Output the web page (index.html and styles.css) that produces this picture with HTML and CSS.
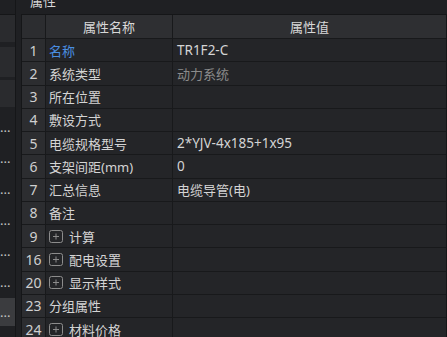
FILE: index.html
```html
<!DOCTYPE html>
<html lang="zh">
<head>
  <meta charset="UTF-8">
  <title>属性</title>
  <link rel="stylesheet" href="styles.css">
</head>
<body>
  <div class="side">
    <div class="side-top"></div>
    <div class="side-band"></div>
    <div class="side-band tall"></div>
    <div class="side-band"></div>
    <div class="side-item">...</div>
    <div class="side-item">...</div>
    <div class="side-item">...</div>
    <div class="side-item">...</div>
    <div class="side-item">...</div>
    <div class="side-item">...</div>
    <div class="side-item active">...</div>
  </div>

  <div class="main">
    <div class="title"><span>属性</span></div>

    <div class="grid">
      <div class="row head">
        <div class="idx"></div>
        <div class="name">属性名称</div>
        <div class="val">属性值</div>
      </div>
      <div class="row">
        <div class="idx">1</div>
        <div class="name link">名称</div>
        <div class="val num">TR1F2-C</div>
      </div>
      <div class="row">
        <div class="idx">2</div>
        <div class="name">系统类型</div>
        <div class="val muted">动力系统</div>
      </div>
      <div class="row">
        <div class="idx">3</div>
        <div class="name">所在位置</div>
        <div class="val"></div>
      </div>
      <div class="row">
        <div class="idx">4</div>
        <div class="name">敷设方式</div>
        <div class="val"></div>
      </div>
      <div class="row">
        <div class="idx">5</div>
        <div class="name">电缆规格型号</div>
        <div class="val num">2*YJV-4x185+1x95</div>
      </div>
      <div class="row">
        <div class="idx">6</div>
        <div class="name">支架间距(mm)</div>
        <div class="val num">0</div>
      </div>
      <div class="row">
        <div class="idx">7</div>
        <div class="name">汇总信息</div>
        <div class="val">电缆导管(电)</div>
      </div>
      <div class="row">
        <div class="idx">8</div>
        <div class="name">备注</div>
        <div class="val"></div>
      </div>
      <div class="row">
        <div class="idx">9</div>
        <div class="name group"><svg class="plus" viewBox="0 0 14 13"><rect x="0.5" y="0.5" width="13" height="12" rx="2"/><path d="M7 3.5v6M4 6.5h6"/></svg>计算</div>
        <div class="val"></div>
      </div>
      <div class="row">
        <div class="idx">16</div>
        <div class="name group"><svg class="plus" viewBox="0 0 14 13"><rect x="0.5" y="0.5" width="13" height="12" rx="2"/><path d="M7 3.5v6M4 6.5h6"/></svg>配电设置</div>
        <div class="val"></div>
      </div>
      <div class="row">
        <div class="idx">20</div>
        <div class="name group"><svg class="plus" viewBox="0 0 14 13"><rect x="0.5" y="0.5" width="13" height="12" rx="2"/><path d="M7 3.5v6M4 6.5h6"/></svg>显示样式</div>
        <div class="val"></div>
      </div>
      <div class="row">
        <div class="idx">23</div>
        <div class="name">分组属性</div>
        <div class="val"></div>
      </div>
      <div class="row">
        <div class="idx">24</div>
        <div class="name group"><svg class="plus" viewBox="0 0 14 13"><rect x="0.5" y="0.5" width="13" height="12" rx="2"/><path d="M7 3.5v6M4 6.5h6"/></svg>材料价格</div>
        <div class="val"></div>
      </div>
    </div>
  </div>
</body>
</html>
```

FILE: styles.css
```css
body {
  margin: 0;
  height: 337px;
  overflow: hidden;
  display: flex;
  background: #1f2023;
  font-family: "Noto Sans", "Noto Sans CJK SC", sans-serif;
  font-size: 13px;
  color: #d4d4d4;
}
.side {
  width: 15px;
  flex: none;
  border-right: 1px solid #151618;
  overflow: hidden;
}
.side-top {
  height: 14px;
  border-bottom: 1px solid #151618;
}
.side-band {
  height: 27px;
  background: #2a2b2e;
  margin-bottom: 5px;
}
.side-band.tall {
  height: 30px;
  margin-bottom: 3px;
}
.side-item {
  height: 31px;
  line-height: 31px;
  text-align: right;
  padding-right: 6px;
  color: #c4c4c4;
  white-space: nowrap;
}
.side-item.active {
  background: #3b3c3f;
  height: 28px;
  line-height: 28px;
}
.main {
  flex: 1;
  padding-left: 5px;
}
.title {
  height: 14px;
  border-bottom: 1px solid #151618;
  overflow: hidden;
  padding-left: 9px;
}
.title span {
  display: block;
  margin-top: -8px;
  line-height: 19px;
  color: #d8d8d8;
}
.grid {
  border-left: 1px solid #151618;
  border-right: 1px solid #151618;
  width: 426px;
  box-sizing: border-box;
}
.row {
  display: grid;
  grid-template-columns: 24px 127px 1fr;
  height: 23.25px;
  box-sizing: border-box;
  border-bottom: 1px solid #18191b;
  background: #242528;
}
.row.head {
  height: 24px;
  background: #2e2f32;
}
.row > div {
  display: flex;
  align-items: center;
  white-space: nowrap;
  overflow: hidden;
}
.idx {
  justify-content: center;
  background: #2c2d30;
  border-right: 1px solid #18191b;
  color: #cfcfcf;
  font-size: 14px;
}
.name {
  padding-left: 3px;
  border-right: 1px solid #18191b;
}
.val {
  padding-left: 4px;
}
.val.num {
  font-size: 13.5px;
}
.head .name,
.head .val {
  justify-content: center;
  padding-left: 0;
  color: #d8d8d8;
}
.link {
  color: #4a8ee0;
}
.muted {
  color: #8b8b8b;
}
.plus {
  width: 14px;
  height: 13px;
  margin-right: 6px;
  flex: none;
  fill: none;
  stroke: #8c8c8c;
  stroke-width: 1;
}
```
